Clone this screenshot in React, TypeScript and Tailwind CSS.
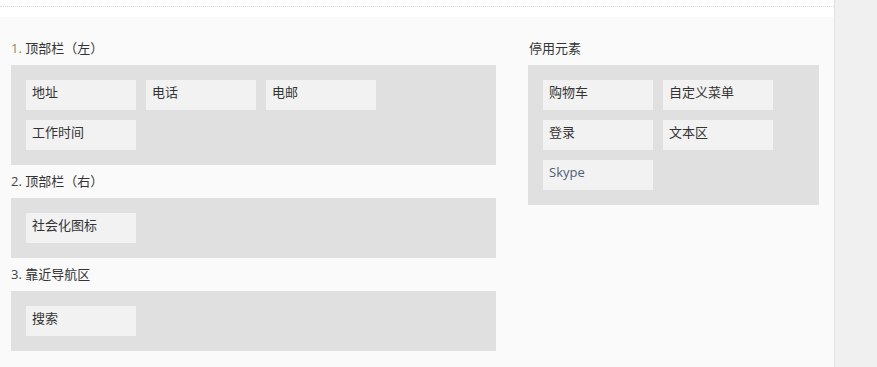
import React from "react";

type Section = {
  num: string;
  title: string;
  items: string[];
};

const left: Section[] = [
  { num: "1.", title: "顶部栏（左）", items: ["地址", "电话", "电邮", "工作时间"] },
  { num: "2.", title: "顶部栏（右）", items: ["社会化图标"] },
  { num: "3.", title: "靠近导航区", items: ["搜索"] },
];

const disabled = ["购物车", "自定义菜单", "登录", "文本区", "Skype"];

function Item({ label }: { label: string }) {
  const latin = /^[A-Za-z]+$/.test(label);
  return (
    <div
      className={`w-[110px] h-[30px] bg-[#f2f2f2] px-[6px] pt-[2px] text-[13px] leading-[20px] ${latin ? "text-[#4f5d78]" : "text-[#333]"}`}
    >
      {label}
    </div>
  );
}

function Box({ items }: { items: string[] }) {
  return (
    <div className="bg-[#e0e0e0] p-[15px] flex flex-wrap gap-[10px]">
      {items.map((it) => (
        <Item key={it} label={it} />
      ))}
    </div>
  );
}

export default function App() {
  return (
    <div
      className="flex h-[367px] w-full overflow-hidden"
      style={{ fontFamily: '"Open Sans", "Noto Sans CJK SC", sans-serif' }}
    >
      <main className="w-[834px] shrink-0 bg-[#fafafa] flex flex-col">
        {/* top strip with dotted rule */}
        <div className="h-[17px] bg-white pt-[6px]">
          <div className="border-t border-dotted border-[#d6d6d6]" />
        </div>

        <div className="flex gap-[32px] px-[11px] pt-[15px]">
          {/* active areas */}
          <div className="w-[485px] flex flex-col">
            {left.map((s) => (
              <div key={s.num}>
                <h3 className="pt-[6px] pb-[7px] text-[13px] leading-[20px] text-[#333] font-normal">
                  <span className={s.num === "1." ? "text-[#a8843f]" : "text-[#444]"}>
                    {s.num}
                  </span>{" "}
                  {s.title}
                </h3>
                <Box items={s.items} />
              </div>
            ))}
          </div>

          {/* disabled elements */}
          <div className="w-[291px] flex flex-col">
            <h3 className="pt-[6px] pb-[7px] pl-px text-[13px] leading-[20px] text-[#333] font-normal">
              停用元素
            </h3>
            <Box items={disabled} />
          </div>
        </div>
      </main>
      <aside className="flex-1 bg-[#f0f0f0] border-l border-[#e2e2e2]" />
    </div>
  );
}
